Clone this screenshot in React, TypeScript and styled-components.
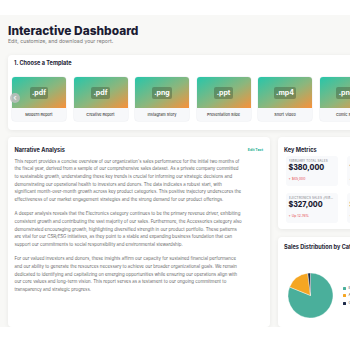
import React from "react";
import styled, { createGlobalStyle } from "styled-components";

const Global = createGlobalStyle`
  html, body { margin: 0; padding: 0; background: #ffffff; overflow: hidden; }
  body { font-family: Inter, "Noto Sans", sans-serif; color: #1c1c33; }
  #root { width: 411px; }
`;

const TopBar = styled.div`
  height: 15px;
  background: #ffffff;
`;

const Main = styled.main`
  background: #f8f8f6;
  padding: 8px 8px 0 8px;
`;

const Title = styled.h1`
  margin: 0;
  font-size: 11.9px;
  line-height: 15px;
  font-weight: 800;
  color: #1c1c33;
`;

const Subtitle = styled.p`
  margin: 0;
  font-size: 5.2px;
  line-height: 7px;
  color: #777;
`;

const Card = styled.section`
  background: #ffffff;
  border-radius: 4px;
  box-shadow: 0 1px 5px rgba(0, 0, 0, 0.07);
`;

const TemplateCard = styled(Card)`
  margin-top: 10px;
  padding: 4.5px 0 9px 0;
`;

const SectionTitle = styled.h2`
  margin: 0;
  font-size: 5.6px;
  line-height: 7px;
  font-weight: 700;
  color: #1c1c33;
`;

const TemplateTitle = styled(SectionTitle)`
  padding-left: 6px;
`;

const Track = styled.div`
  position: relative;
  display: flex;
  gap: 7.5px;
  padding-left: 4px;
  margin-top: 10.5px;
`;

const TemplateItem = styled.div`
  flex: none;
  width: 54px;
  border-radius: 3px;
  overflow: hidden;
  background: #f7f8fa;
  box-shadow: 0 0 0 0.5px #eceef2;
`;

const Thumb = styled.div`
  height: 31px;
  background: linear-gradient(150deg, #27c6aa 0%, #8db67c 55%, #f8913a 100%);
  display: flex;
  align-items: center;
  justify-content: center;
`;

const Badge = styled.span`
  background: rgba(45, 55, 35, 0.32);
  color: #ffffff;
  font-size: 7px;
  font-weight: 700;
  line-height: 12px;
  padding: 0 2.5px;
  border-radius: 2px;
`;

const ItemLabel = styled.div`
  height: 13px;
  line-height: 13px;
  text-align: center;
  font-size: 3.8px;
  font-weight: 500;
  color: #444;
  white-space: nowrap;
`;

const ArrowButton = styled.div`
  position: absolute;
  left: 2px;
  top: 16px;
  width: 10px;
  height: 10px;
  border-radius: 50%;
  background: rgba(190, 190, 190, 0.85);
  color: #f4f4f4;
  font-size: 8px;
  line-height: 9px;
  text-align: center;
  font-weight: 700;
`;

const Grid = styled.div`
  display: grid;
  grid-template-columns: 262px 125px;
  gap: 8px;
  margin-top: 7px;
`;

const NarrativeCard = styled(Card)`
  padding: 9px 7px 8px 6.5px;
`;

const CardHeader = styled.div`
  display: flex;
  align-items: center;
  justify-content: space-between;
  height: 8px;
`;

const EditLink = styled.span`
  font-size: 3.6px;
  font-weight: 700;
  color: #2bb39a;
`;

const Paragraph = styled.p`
  margin: 0;
  font-size: 4.4px;
  line-height: 7.6px;
  color: #6a6a6a;
  & + & { margin-top: 7px; }
`;

const Line = styled.span`
  display: block;
  white-space: nowrap;
`;

const Body = styled.div`
  margin-top: 3.9px;
`;

const RightColumn = styled.div`
  display: flex;
  flex-direction: column;
  gap: 8px;
`;

const MetricsCard = styled(Card)`
  padding: 9px 6px 6px 6px;
`;

const MetricGrid = styled.div`
  display: grid;
  grid-template-columns: 52px 52px;
  column-gap: 9px;
  row-gap: 7px;
  margin-top: 2px;
  padding-left: 1.5px;
`;

const MetricTile = styled.div`
  background: #f8f9fb;
  border-radius: 3px;
  padding: 3px 3px 4px 3px;
  height: 23px;
`;

const MetricLabel = styled.div`
  font-size: 3px;
  line-height: 4px;
  letter-spacing: 0.15px;
  color: #7a7a85;
  text-transform: uppercase;
  white-space: nowrap;
  overflow: hidden;
  text-overflow: ellipsis;
`;

const MetricValue = styled.div`
  font-size: 7.1px;
  line-height: 10px;
  font-weight: 800;
  color: #1c1c33;
  white-space: nowrap;
`;

const MetricDelta = styled.div`
  margin-top: 3px;
  font-size: 3.4px;
  line-height: 6px;
  color: #e5484d;
  white-space: nowrap;
`;

const SalesCard = styled(Card)`
  flex: 1;
  padding: 6px 6px 9px 6px;
`;

const SalesTitle = styled(SectionTitle)`
  line-height: 8px;
`;

const Chart = styled.div`
  display: flex;
  align-items: center;
  gap: 10px;
  margin-top: 22px;
  padding-left: 3.5px;
`;

const Legend = styled.ul`
  list-style: none;
  margin: 0;
  padding: 0;
  display: flex;
  flex-direction: column;
  gap: 4.5px;
`;

const LegendItem = styled.li`
  display: flex;
  align-items: center;
  gap: 3px;
  font-size: 3.6px;
  line-height: 3px;
  color: #555;
  white-space: nowrap;
`;

const Dot = styled.span<{ $color: string }>`
  width: 3px;
  height: 3px;
  border-radius: 0.5px;
  background: ${(p) => p.$color};
`;

const templates = [
  { ext: ".pdf", label: "Modern Report" },
  { ext: ".pdf", label: "Creative Report" },
  { ext: ".png", label: "Instagram Story" },
  { ext: ".ppt", label: "Presentation Slide" },
  { ext: ".mp4", label: "Short Video" },
  { ext: ".png", label: "Comic Strip" },
];

const paragraphs = [
  [
    "This report provides a concise overview of our organization's sales performance for the initial two months of",
    "the fiscal year, derived from a sample of our comprehensive sales dataset. As a private company committed",
    "to sustainable growth, understanding these key trends is crucial for informing our strategic decisions and",
    "demonstrating our operational health to investors and donors. The data indicates a robust start, with",
    "significant month-over-month growth across key product categories. This positive trajectory underscores the",
    "effectiveness of our market engagement strategies and the strong demand for our product offerings.",
  ],
  [
    "A deeper analysis reveals that the Electronics category continues to be the primary revenue driver, exhibiting",
    "consistent growth and contributing the vast majority of our sales. Furthermore, the Accessories category also",
    "demonstrated encouraging growth, highlighting diversified strength in our product portfolio. These patterns",
    "are vital for our CSR/ESG initiatives, as they point to a stable and expanding business foundation that can",
    "support our commitments to social responsibility and environmental stewardship.",
  ],
  [
    "For our valued investors and donors, these insights affirm our capacity for sustained financial performance",
    "and our ability to generate the resources necessary to achieve our broader organizational goals. We remain",
    "dedicated to identifying and capitalizing on emerging opportunities while ensuring our operations align with",
    "our core values and long-term vision. This report serves as a testament to our ongoing commitment to",
    "transparency and strategic progress.",
  ],
];

const metrics = [
  { label: "February Total Sales", value: "$380,000", delta: "+  $45,000" },
  { label: "Month-over-Month Growth", value: "13.4%", delta: "+  vs January" },
  { label: "Electronics Sales (February)", value: "$327,000", delta: "+  Up 12.76%" },
  { label: "Accessories Sales (February)", value: "$41,000", delta: "+  Up 8.20%" },
];

const slices = [
  { label: "Electronics", color: "#4aaf9b", from: 0, to: 292 },
  { label: "Accessories", color: "#f5a623", from: 292, to: 353 },
  { label: "Other", color: "#1e2b48", from: 353, to: 360 },
];

function arcPath(cx: number, cy: number, r: number, a0: number, a1: number) {
  const rad = (a: number) => ((a - 90) * Math.PI) / 180;
  const x0 = cx + r * Math.cos(rad(a0));
  const y0 = cy + r * Math.sin(rad(a0));
  const x1 = cx + r * Math.cos(rad(a1));
  const y1 = cy + r * Math.sin(rad(a1));
  const large = a1 - a0 > 180 ? 1 : 0;
  return `M${cx} ${cy} L${x0} ${y0} A${r} ${r} 0 ${large} 1 ${x1} ${y1} Z`;
}

function Pie() {
  return (
    <svg width="45" height="45" viewBox="0 0 46 46">
      {slices.map((s) => (
        <path key={s.label} d={arcPath(23, 23, 23, s.from, s.to)} fill={s.color} stroke="#fff" strokeWidth="0.4" />
      ))}
    </svg>
  );
}

export default function App() {
  return (
    <>
      <Global />
      <TopBar />
      <Main>
        <Title>Interactive Dashboard</Title>
        <Subtitle>Edit, customize, and download your report.</Subtitle>

        <TemplateCard>
          <TemplateTitle>1. Choose a Template</TemplateTitle>
          <Track>
            {templates.map((t) => (
              <TemplateItem key={t.label}>
                <Thumb>
                  <Badge>{t.ext}</Badge>
                </Thumb>
                <ItemLabel>{t.label}</ItemLabel>
              </TemplateItem>
            ))}
            <ArrowButton>‹</ArrowButton>
          </Track>
        </TemplateCard>

        <Grid>
          <NarrativeCard>
            <CardHeader>
              <SectionTitle>Narrative Analysis</SectionTitle>
              <EditLink>Edit Text</EditLink>
            </CardHeader>
            <Body>
              {paragraphs.map((p, i) => (
                <Paragraph key={i}>
                  {p.map((l, j) => (
                    <Line key={j}>{l}</Line>
                  ))}
                </Paragraph>
              ))}
            </Body>
          </NarrativeCard>

          <RightColumn>
            <MetricsCard>
              <CardHeader>
                <SectionTitle>Key Metrics</SectionTitle>
              </CardHeader>
              <MetricGrid>
                {metrics.map((m) => (
                  <MetricTile key={m.label}>
                    <MetricLabel>{m.label}</MetricLabel>
                    <MetricValue>{m.value}</MetricValue>
                    <MetricDelta>{m.delta}</MetricDelta>
                  </MetricTile>
                ))}
              </MetricGrid>
            </MetricsCard>

            <SalesCard>
              <SalesTitle>Sales Distribution by Category (Overall)</SalesTitle>
              <Chart>
                <Pie />
                <Legend>
                  {slices.map((s) => (
                    <LegendItem key={s.label}>
                      <Dot $color={s.color} />
                      {s.label}
                    </LegendItem>
                  ))}
                </Legend>
              </Chart>
            </SalesCard>
          </RightColumn>
        </Grid>
      </Main>
    </>
  );
}
